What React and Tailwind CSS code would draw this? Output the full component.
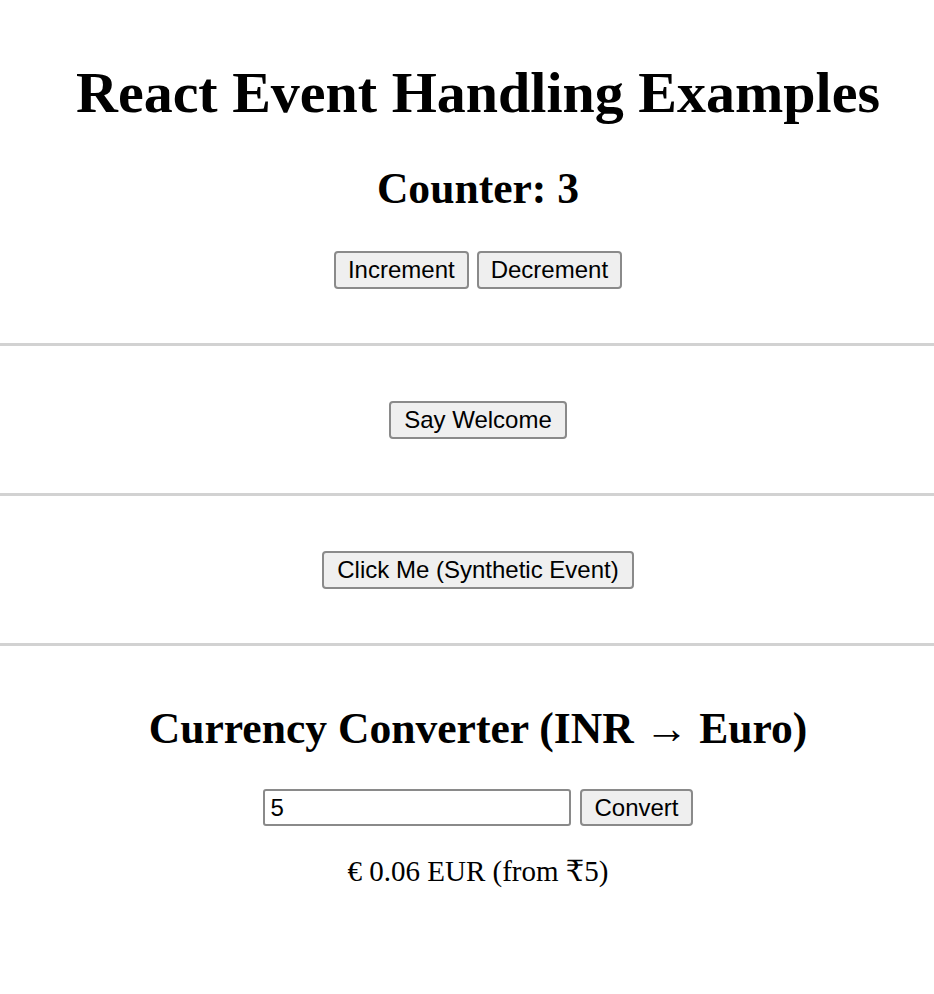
import { useState } from 'react';

const serif = "font-['Liberation_Serif','Times_New_Roman','DejaVu_Serif',serif]";
const btn =
  "font-['Liberation_Sans',Arial,'Noto_Sans',sans-serif] text-[24px] leading-[28px] text-black bg-[#efefef] border-2 border-[#8a8a8a] rounded-[4px] hover:bg-[#e5e5e5]";

function Rule() {
  return <hr className="border-0 border-t-[3px] border-[#d2d2d2] m-0" />;
}

export default function App() {
  const [count, setCount] = useState(3);
  const [inr, setInr] = useState('5');
  const [result, setResult] = useState('€ 0.06 EUR (from ₹5)');

  const convert = () => {
    const n = parseFloat(inr) || 0;
    setResult(`€ ${(n * 0.011).toFixed(2)} EUR (from ₹${inr})`);
  };

  return (
    <div className={`min-h-screen bg-white text-black ${serif}`}>
      <div className="text-center pl-[22px] pt-[60px]">
        <h1 className="text-[58px] leading-[66px] font-bold">React Event Handling Examples</h1>
        <h2 className="text-[43.6px] leading-[50px] font-bold mt-[37px]">Counter: {count}</h2>
        <div className="flex justify-center gap-[8px] mt-[38px] pb-[54px]">
          <button className={`${btn} px-[12px] h-[38px]`} onClick={() => setCount(count + 1)}>Increment</button>
          <button className={`${btn} px-[12px] h-[38px]`} onClick={() => setCount(count - 1)}>Decrement</button>
        </div>
      </div>
      <Rule />
      <div className="flex justify-center pl-[22px] pt-[55px] pb-[54px]">
        <button className={`${btn} px-[13px] h-[38px]`} onClick={() => alert('Welcome!')}>Say Welcome</button>
      </div>
      <Rule />
      <div className="flex justify-center pl-[22px] pt-[55px] pb-[54px]">
        <button className={`${btn} px-[13px] h-[38px]`} onClick={(e) => console.log(e)}>Click Me (Synthetic Event)</button>
      </div>
      <Rule />
      <div className="text-center pl-[22px] pt-[57px]">
        <h2 className="text-[43.6px] leading-[50px] font-bold">Currency Converter (INR → Euro)</h2>
        <div className="flex justify-center gap-[9px] mt-[36px]">
          <input
            className="font-['Liberation_Sans',Arial,sans-serif] text-[24px] w-[308px] h-[37px] border-2 border-[#8a8a8a] rounded-[3px] px-[5px] outline-none"
            value={inr}
            onChange={(e) => setInr(e.target.value)}
          />
          <button className={`${btn} px-[12px] h-[37px]`} onClick={convert}>Convert</button>
        </div>
        <p className="text-[29px] leading-[34px] mt-[28px]">{result}</p>
      </div>
    </div>
  );
}
